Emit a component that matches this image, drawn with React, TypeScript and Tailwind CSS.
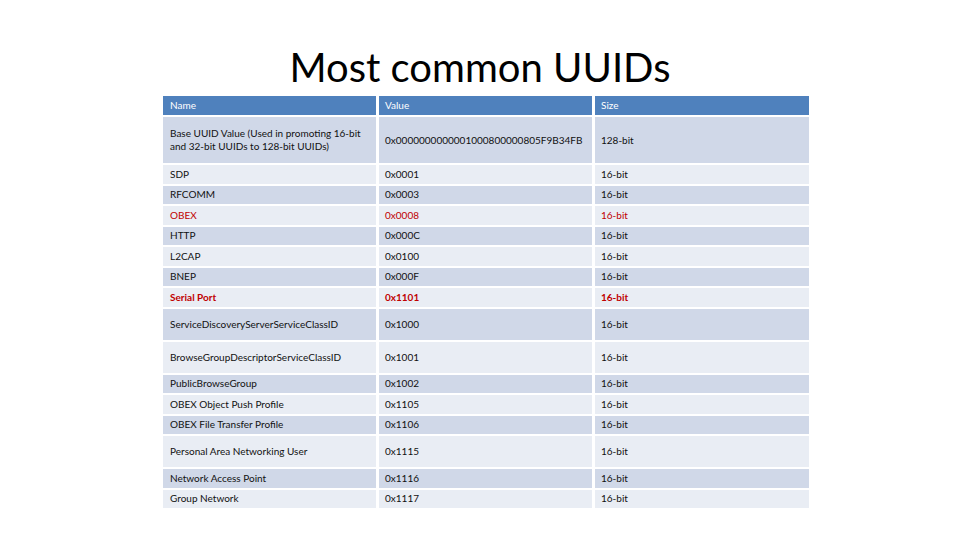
import React from 'react';

interface Row {
  name: string[];
  value: string;
  size: string;
  h: string;
  red?: boolean;
  bold?: boolean;
}

const rows: Row[] = [
  { name: ['Base UUID Value (Used in promoting 16-bit', 'and 32-bit UUIDs to 128-bit UUIDs)'], value: '0x0000000000001000800000805F9B34FB', size: '128-bit', h: 'h-[46px]' },
  { name: ['SDP'], value: '0x0001', size: '16-bit', h: 'h-[18.5px]' },
  { name: ['RFCOMM'], value: '0x0003', size: '16-bit', h: 'h-[18.5px]' },
  { name: ['OBEX'], value: '0x0008', size: '16-bit', h: 'h-[18.5px]', red: true },
  { name: ['HTTP'], value: '0x000C', size: '16-bit', h: 'h-[18.5px]' },
  { name: ['L2CAP'], value: '0x0100', size: '16-bit', h: 'h-[18.5px]' },
  { name: ['BNEP'], value: '0x000F', size: '16-bit', h: 'h-[18.5px]' },
  { name: ['Serial Port'], value: '0x1101', size: '16-bit', h: 'h-[18.5px]', red: true, bold: true },
  { name: ['ServiceDiscoveryServerServiceClassID'], value: '0x1000', size: '16-bit', h: 'h-[31px]' },
  { name: ['BrowseGroupDescriptorServiceClassID'], value: '0x1001', size: '16-bit', h: 'h-[31px]' },
  { name: ['PublicBrowseGroup'], value: '0x1002', size: '16-bit', h: 'h-[18.5px]' },
  { name: ['OBEX Object Push Profile'], value: '0x1105', size: '16-bit', h: 'h-[18.5px]' },
  { name: ['OBEX File Transfer Profile'], value: '0x1106', size: '16-bit', h: 'h-[18.5px]' },
  { name: ['Personal Area Networking User'], value: '0x1115', size: '16-bit', h: 'h-[31px]' },
  { name: ['Network Access Point'], value: '0x1116', size: '16-bit', h: 'h-[18.5px]' },
  { name: ['Group Network'], value: '0x1117', size: '16-bit', h: 'h-[18.5px]' },
];

const App: React.FC = () => {
  return (
    <div className="w-[960px] h-[540px] bg-white overflow-hidden flex flex-col items-center" style={{ fontFamily: 'Lato, "Liberation Sans", sans-serif' }}>
      <h1 className="mt-[44px] text-[40px] leading-[46px] text-black font-normal">Most common UUIDs</h1>

      {/* Table */}
      <div className="mt-[6px] ml-[12px] grid grid-cols-[213px_213px_214px] gap-x-[3px] gap-y-[2px] text-[10px] text-[#111]">
        <div className="h-[19px] bg-[#4f81bd] text-white px-[7px] flex items-center">Name</div>
        <div className="h-[19px] bg-[#4f81bd] text-white px-[6px] flex items-center">Value</div>
        <div className="h-[19px] bg-[#4f81bd] text-white px-[6px] flex items-center">Size</div>

        {rows.map((r, i) => {
          const bg = i % 2 === 0 ? 'bg-[#d0d8e8]' : 'bg-[#e9edf4]';
          const color = r.red ? 'text-[#c00000]' : 'text-[#111]';
          const weight = r.bold ? 'font-bold' : 'font-normal';
          return (
            <React.Fragment key={i}>
              <div className={`${r.h} ${bg} ${color} ${weight} px-[7px] flex flex-col justify-center leading-[13px]`}>
                {r.name.map((l, j) => (
                  <span key={j}>{l}</span>
                ))}
              </div>
              <div className={`${r.h} ${bg} ${color} ${weight} px-[6px] flex items-center`}>{r.value}</div>
              <div className={`${r.h} ${bg} ${color} ${weight} px-[6px] flex items-center`}>{r.size}</div>
            </React.Fragment>
          );
        })}
      </div>
    </div>
  );
};

export default App;
